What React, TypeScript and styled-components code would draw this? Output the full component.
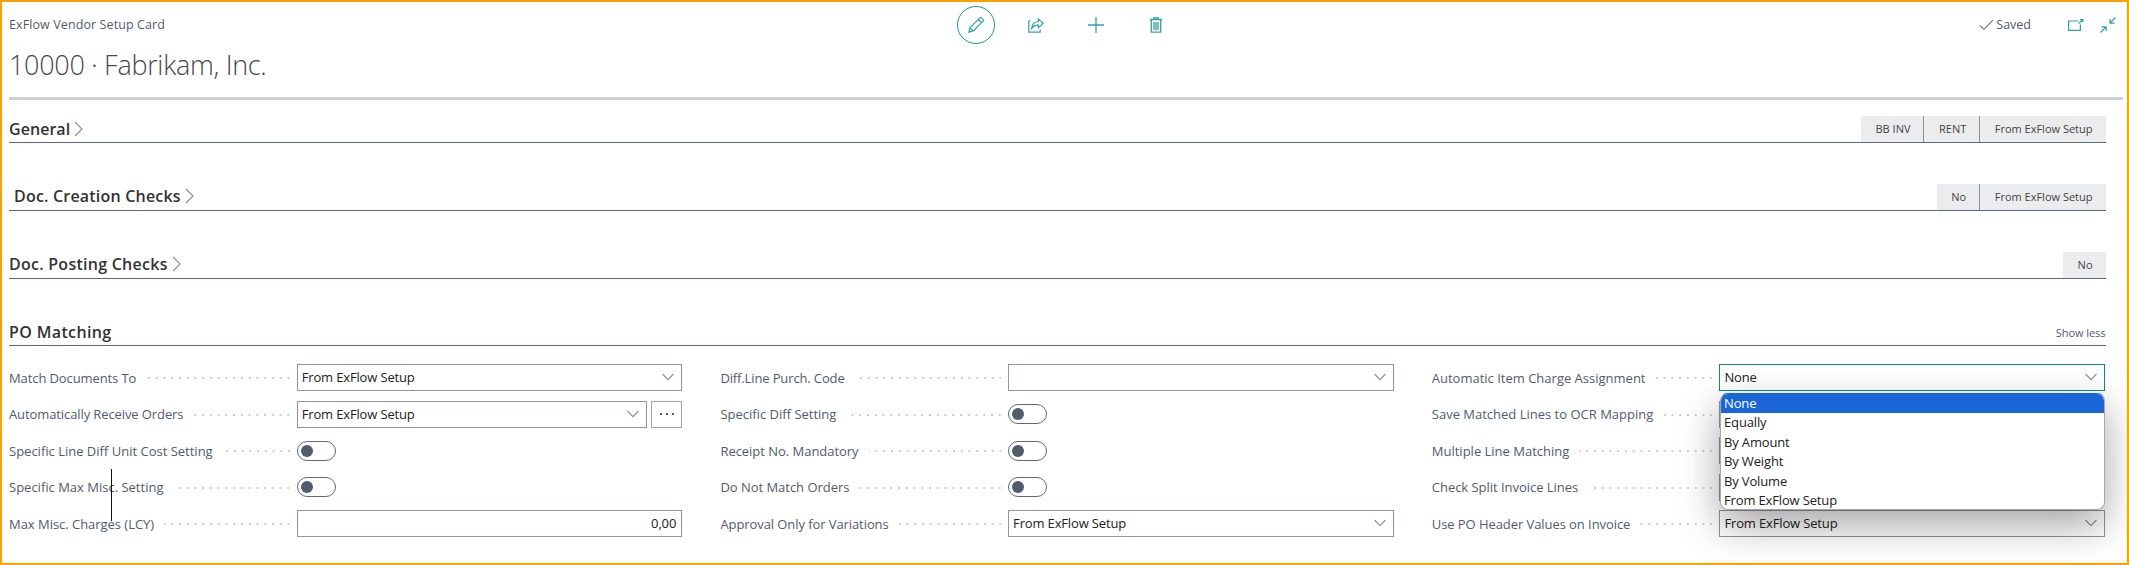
import React from 'react';
import styled, { createGlobalStyle } from 'styled-components';

const Global = createGlobalStyle`
  * { box-sizing: border-box; }
  body { margin: 0; background: #fff; }
`;

const Page = styled.div`
  position: relative;
  width: 2129px;
  height: 565px;
  overflow: hidden;
  border: 2px solid #f9a100;
  padding: 0 4px 0 7px;
  background: #fff;
  font-family: 'Open Sans', 'Noto Sans', sans-serif;
  font-size: 13px;
  color: #505c6d;
  white-space: nowrap;
`;

const Txt = styled.span<{ $ls?: number }>`
  letter-spacing: ${p => p.$ls ?? 0}px;
`;

const Header = styled.header`
  height: 98px;
  border-bottom: 3px solid #cdd1d5;
`;

const TopBar = styled.div`
  display: grid;
  grid-template-columns: 948px auto 1fr;
  height: 44px;
`;

const Caption = styled.div`
  padding-top: 14px;
  font-size: 12.5px;
  line-height: 17px;
`;

const Title = styled.h1`
  margin: 0;
  font-size: 27px;
  font-weight: 300;
  line-height: 38px;
  letter-spacing: -0.3px;
  color: #484848;
`;

const Actions = styled.div`
  display: flex;
  padding-top: 4px;
`;

const Action = styled.button<{ $active?: boolean }>`
  display: flex;
  align-items: center;
  justify-content: center;
  width: 38px;
  height: 38px;
  margin-right: 22px;
  padding: 0;
  border: ${p => (p.$active ? '1.5px solid #1d9499' : '0')};
  border-radius: 50%;
  background: none;
  color: #35a0a5;
`;

const Status = styled.div`
  display: flex;
  justify-content: flex-end;
  padding: 14px 7px 0 0;
  font-size: 12.5px;
  line-height: 18px;
`;

const Saved = styled.span`
  margin-left: 2px;
`;

const StatusIcon = styled.span<{ $gap: number }>`
  display: flex;
  align-items: center;
  height: 18px;
  margin-left: ${p => p.$gap}px;
  color: #35a0a5;
`;

const Section = styled.section`
  display: flex;
  align-items: flex-end;
  justify-content: space-between;
  width: 2096.5px;
  height: 67.8px;
  border-bottom: 1px solid #5a677c;
  &:first-of-type { height: 43px; }
`;

const Heading = styled.h2<{ $indent?: number; $ls: number }>`
  display: flex;
  align-items: center;
  gap: 4px;
  margin: 0 0 2.4px;
  padding-left: ${p => p.$indent ?? 0}px;
  font-size: 16px;
  font-weight: 600;
  line-height: 22px;
  letter-spacing: ${p => p.$ls}px;
  color: #333;
`;

const Chips = styled.div`
  display: flex;
`;

const Chip = styled.span`
  height: 26px;
  padding: 0 13px 0 14.5px;
  background: #ebecee;
  font-size: 11px;
  line-height: 26px;
  color: #444;
  & + & { border-left: 1px solid #8e9094; }
`;

const ShowLess = styled.a`
  margin-bottom: 3px;
  font-size: 11px;
  line-height: 18px;
  letter-spacing: -0.05px;
`;

const Form = styled.div`
  display: grid;
  grid-template-columns: 673px 673px 673px;
  column-gap: 38.4px;
  padding-top: 13.2px;
`;

const Column = styled.div`
  display: grid;
  grid-auto-rows: 36.5px;
`;

const Row = styled.div`
  display: grid;
  grid-template-columns: 287.7px 385.5px;
  align-items: center;
`;

const Label = styled.label`
  display: flex;
  align-items: center;
  padding-right: 7px;
`;

const Leader = styled.i`
  flex: 1;
  height: 2px;
  margin: 1px 0 0 10px;
  background-image: linear-gradient(to left, #c9ccd1 2px, transparent 2px);
  background-size: 7.75px 2px;
  background-position: right center;
  background-repeat: repeat-x;
`;

const Control = styled.div`
  display: flex;
  gap: 4px;
`;

const Box = styled.div<{ $focus?: boolean; $right?: boolean }>`
  display: flex;
  flex: 1;
  align-items: center;
  justify-content: ${p => (p.$right ? 'flex-end' : 'space-between')};
  height: 27px;
  padding: 0 ${p => (p.$right ? 5 : 7)}px 1px 4px;
  border: 1px solid ${p => (p.$focus ? '#128488' : '#8d95a3')};
  background: #fff;
  color: #212121;
  letter-spacing: -0.15px;
`;

const Assist = styled.button`
  display: flex;
  align-items: center;
  justify-content: center;
  width: 31px;
  height: 27px;
  padding: 0;
  border: 1px solid #a5a5a5;
  background: #fff;
`;

const Toggle = styled.span`
  display: flex;
  align-items: center;
  width: 39px;
  height: 20px;
  padding-left: 3px;
  border: 1.5px solid #5c687b;
  border-radius: 10px;
  &::before {
    content: '';
    width: 12px;
    height: 12px;
    border-radius: 50%;
    background: #505c6d;
  }
`;

const Menu = styled.ul`
  position: absolute;
  left: 1718px;
  top: 391px;
  width: 385px;
  height: 117px;
  margin: 0;
  padding: 0;
  overflow: hidden;
  list-style: none;
  border-radius: 8px;
  border: 1px solid #a9a9a9;
  border-top-color: #1a66d6;
  background: #fff;
  box-shadow: 0 15px 40px rgba(0, 0, 0, 0.36);
`;

const Option = styled.li<{ $on?: boolean }>`
  height: 19.4px;
  padding-left: 3px;
  line-height: 18px;
  letter-spacing: -0.15px;
  color: ${p => (p.$on ? '#fff' : '#212121')};
  background: ${p => (p.$on ? '#1a66d6' : 'transparent')};
`;

const Cursor = styled.i`
  position: absolute;
  left: 109px;
  top: 467px;
  width: 1px;
  height: 52px;
  background: #111;
`;

const ChevronRight = () => (
  <svg width="9" height="16" viewBox="0 0 9 16" fill="none" stroke="#8b8b8b" strokeWidth="1.1">
    <path d="M1 1l7 7-7 7" />
  </svg>
);

const ChevronDown = () => (
  <svg width="12" height="8" viewBox="0 0 12 8" fill="none" stroke="#8b8f96" strokeWidth="1.1">
    <path d="M.5 1L6 6.6 11.5 1" />
  </svg>
);

const Ellipsis = () => (
  <svg width="14" height="2" viewBox="0 0 14 2" fill="#505c6d">
    <rect width="2" height="2" />
    <rect x="6" width="2" height="2" />
    <rect x="12" width="2" height="2" />
  </svg>
);

type Field = { label: string; ls?: number; kind: 'select' | 'assist' | 'toggle' | 'amount'; value?: string; focus?: boolean };

const setup = 'From ExFlow Setup';

const columns: Field[][] = [
  [
    { label: 'Match Documents To', ls: -0.1, kind: 'select', value: setup },
    { label: 'Automatically Receive Orders', ls: -0.1, kind: 'assist', value: setup },
    { label: 'Specific Line Diff Unit Cost Setting', kind: 'toggle' },
    { label: 'Specific Max Misc. Setting', kind: 'toggle' },
    { label: 'Max Misc. Charges (LCY)', ls: -0.03, kind: 'amount', value: '0,00' },
  ],
  [
    { label: 'Diff.Line Purch. Code', ls: -0.13, kind: 'select', value: '' },
    { label: 'Specific Diff Setting', kind: 'toggle' },
    { label: 'Receipt No. Mandatory', ls: -0.03, kind: 'toggle' },
    { label: 'Do Not Match Orders', ls: -0.03, kind: 'toggle' },
    { label: 'Approval Only for Variations', ls: -0.08, kind: 'select', value: setup },
  ],
  [
    { label: 'Automatic Item Charge Assignment', kind: 'select', value: 'None', focus: true },
    { label: 'Save Matched Lines to OCR Mapping', kind: 'select', value: '' },
    { label: 'Multiple Line Matching', kind: 'select', value: '' },
    { label: 'Check Split Invoice Lines', ls: -0.03, kind: 'select', value: '' },
    { label: 'Use PO Header Values on Invoice', ls: -0.07, kind: 'select', value: setup },
  ],
];

const FieldRow = ({ field }: { field: Field }) => (
  <Row>
    <Label>
      <Txt $ls={field.ls}>{field.label}</Txt>
      <Leader />
    </Label>
    <Control>
      {field.kind === 'toggle' ? (
        <Toggle />
      ) : (
        <Box $focus={field.focus} $right={field.kind === 'amount'}>
          <span>{field.value}</span>
          {field.kind !== 'amount' && <ChevronDown />}
        </Box>
      )}
      {field.kind === 'assist' && <Assist><Ellipsis /></Assist>}
    </Control>
  </Row>
);

export default function App() {
  return (
    <Page>
      <Global />
      <Header>
        <TopBar>
          <Caption><Txt $ls={0.1}>ExFlow Vendor Setup Card</Txt></Caption>
          <Actions>
            <Action $active>
              <svg width="16" height="16" viewBox="0 0 16 16" fill="none" stroke="currentColor" strokeWidth="1.2">
                <path d="M.8 15.2l1.2-4.4L11.6 1.2a1.6 1.6 0 0 1 2.4 0l.8.8a1.6 1.6 0 0 1 0 2.4L5.2 14zM2 10.8L5.2 14M10.3 2.5l3.2 3.2" />
              </svg>
            </Action>
            <Action>
              <svg width="16" height="15" viewBox="0 0 16 15" fill="none" stroke="currentColor" strokeWidth="1.2">
                <path d="M2.5 3H.8v11.2h11.4V11.5" />
                <path d="M10.4 1l4.9 4.4-4.9 4.3V7.2C7.4 7 5.3 8 3.6 10.4 4 6.4 6.4 3.8 10.4 3.5z" />
              </svg>
            </Action>
            <Action>
              <svg width="16" height="16" viewBox="0 0 16 16" fill="none" stroke="currentColor" strokeWidth="1.3">
                <path d="M0 8h16M8 0v16" />
              </svg>
            </Action>
            <Action>
              <svg width="12" height="16" viewBox="0 0 12 16" fill="none" stroke="currentColor" strokeWidth="1.3">
                <path d="M0 2.5h12M3.7 2.5V.8h4.600v1.700M1.300 2.500v12.700h9.400V2.500M4 5v8M6 5v8M8 5v8" />
              </svg>
            </Action>
          </Actions>
          <Status>
            <svg width="15" height="18" viewBox="0 0 15 18" fill="none" stroke="#7b8594" strokeWidth="1.2">
              <path d="M1 9.500l4 4L14 4" />
            </svg>
            <Saved>Saved</Saved>
            <StatusIcon $gap={37}>
              <svg width="16" height="12" viewBox="0 0 16 12" fill="none" stroke="currentColor" strokeWidth="1.2">
                <path d="M10 2H.6v9.400h11.800V5.500M10.500 4.500L14.400 1.200M12 .7h2.900v2.600" />
              </svg>
            </StatusIcon>
            <StatusIcon $gap={16}>
              <svg width="16" height="16" viewBox="0 0 16 16" fill="none" stroke="currentColor" strokeWidth="1.2">
                <path d="M15.500.5L10 6M10 2v4.200h4.500M.5 15.500L6 10M1.500 9.800h4.700V14" />
              </svg>
            </StatusIcon>
          </Status>
        </TopBar>
        <Title>10000 · Fabrikam, Inc.</Title>
      </Header>

      <Section>
        <Heading $ls={0.05}>General <ChevronRight /></Heading>
        <Chips><Chip>BB INV</Chip><Chip>RENT</Chip><Chip>{setup}</Chip></Chips>
      </Section>
      <Section>
        <Heading $indent={5} $ls={0.2}>Doc. Creation Checks <ChevronRight /></Heading>
        <Chips><Chip>No</Chip><Chip>{setup}</Chip></Chips>
      </Section>
      <Section>
        <Heading $ls={0.26}>Doc. Posting Checks <ChevronRight /></Heading>
        <Chips><Chip>No</Chip></Chips>
      </Section>
      <Section>
        <Heading $ls={0.36}>PO Matching</Heading>
        <ShowLess>Show less</ShowLess>
      </Section>

      <Form>
        {columns.map((fields, i) => (
          <Column key={i}>{fields.map(f => <FieldRow key={f.label} field={f} />)}</Column>
        ))}
      </Form>

      <Menu>
        <Option $on>None</Option>
        <Option>Equally</Option>
        <Option>By Amount</Option>
        <Option>By Weight</Option>
        <Option>By Volume</Option>
        <Option>{setup}</Option>
      </Menu>
      <Cursor />
    </Page>
  );
}
